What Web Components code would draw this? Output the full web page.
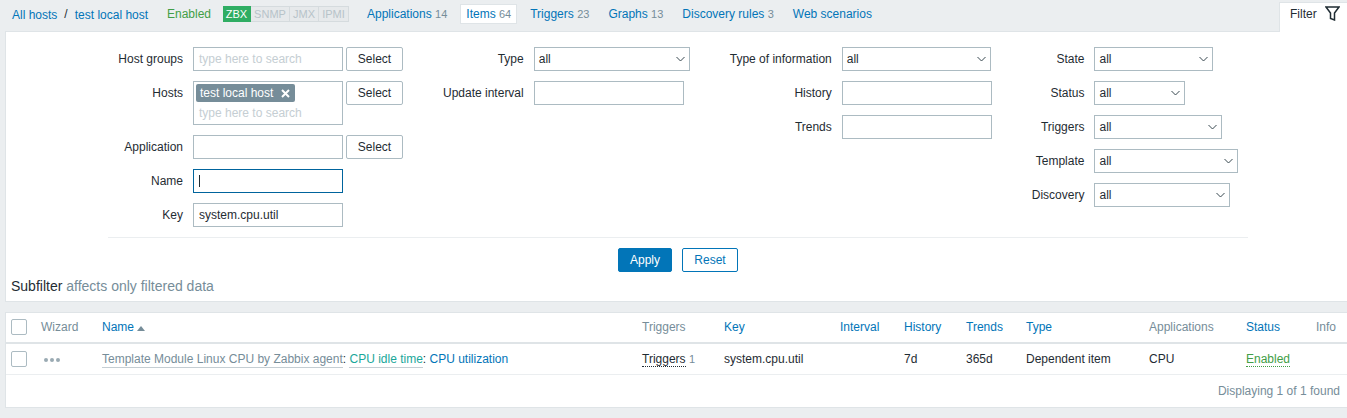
<!DOCTYPE html>
<html>
<head>
<meta charset="utf-8">
<title>Items</title>
<style>
  html, body { margin: 0; background: #ebeef0; }
  body { font: 12px/14px "Liberation Sans", Arial, sans-serif; color: #1f2c33; }
</style>
</head>
<body>
<zbx-nav></zbx-nav>
<zbx-filter>
  <filter-col style="--label: 75px">
    <filter-field label="Host groups"><text-box placeholder="type here to search"></text-box><zbx-button>Select</zbx-button></filter-field>
    <filter-field label="Hosts"><multi-select tag="test local host" placeholder="type here to search"></multi-select><zbx-button>Select</zbx-button></filter-field>
    <filter-field label="Application"><text-box></text-box><zbx-button>Select</zbx-button></filter-field>
    <filter-field label="Name"><text-box focused></text-box></filter-field>
    <filter-field label="Key"><text-box value="system.cpu.util"></text-box></filter-field>
  </filter-col>
  <filter-col>
    <filter-field label="Type"><select-box width="156"></select-box></filter-field>
    <filter-field label="Update interval"><text-box></text-box></filter-field>
  </filter-col>
  <filter-col>
    <filter-field label="Type of information"><select-box width="149"></select-box></filter-field>
    <filter-field label="History"><text-box></text-box></filter-field>
    <filter-field label="Trends"><text-box></text-box></filter-field>
  </filter-col>
  <filter-col>
    <filter-field label="State"><select-box width="119"></select-box></filter-field>
    <filter-field label="Status"><select-box width="91"></select-box></filter-field>
    <filter-field label="Triggers"><select-box width="128"></select-box></filter-field>
    <filter-field label="Template"><select-box width="144"></select-box></filter-field>
    <filter-field label="Discovery"><select-box width="136"></select-box></filter-field>
  </filter-col>
</zbx-filter>
<items-table></items-table>

<script>
const LINK = '#0275b8';
const MUTED = '#768d99';

class ZbxNav extends HTMLElement {
  constructor() {
    super();
    this.attachShadow({ mode: 'open' });
    this.shadowRoot.innerHTML = `
      <style>
      :host { display: flex; height: 31px; align-items: flex-start; white-space: nowrap; }
      a { color: ${LINK}; }
      small { font-size: 11px; color: ${MUTED}; }
      .crumbs { display: flex; margin: 8px 0 0 12px; width: 155px; }
      .crumbs i { font-style: normal; color: #1f2c33; margin: -1px 7px 0 7px; }
      .enabled { color: #429e47; margin-top: 7px; width: 56px; }
      .proto { display: flex; margin-top: 6px; height: 16px; width: 138px; font-size: 11px; line-height: 14px; text-align: center; }
      .proto span { box-sizing: border-box; border: 1px solid #d5dbde; border-left: 0; background: #e6e9eb; color: #b7c3c9; }
      .proto span.on { background: #2fad63; border-color: #2fad63; color: #fff; }
      .tabs { display: flex; gap: 7px; margin-top: 4px; }
      .tabs a { padding: 3px 6px; height: 14px; }
      .tabs a.current { background: #fff; border: 1px solid #dfe4e7; padding: 2px 5px; }
      .filter { margin-left: auto; box-sizing: border-box; height: 30px; margin-top: 2px; width: 68px; background: #fff;
        border: 1px solid #dfe4e7; border-width: 1px 0 0 1px; display: flex; padding: 4px 0 0 10px; }
      .filter svg { margin: -1px 0 0 8px; }
      </style>
      <div class="crumbs"><a>All hosts</a><i>/</i><a>test local host</a></div>
      <span class="enabled">Enabled</span>
      <div class="proto"><span class="on" style="width:28px">ZBX</span><span style="width:39px">SNMP</span><span style="width:29px">JMX</span><span style="width:30px">IPMI</span></div>
      <div class="tabs">
        <a>Applications <small>14</small></a>
        <a class="current">Items <small>64</small></a>
        <a>Triggers <small>23</small></a>
        <a>Graphs <small>13</small></a>
        <a>Discovery rules <small>3</small></a>
        <a>Web scenarios</a>
      </div>
      <div class="filter">Filter
        <svg width="15" height="15" viewBox="0 0 15 15" fill="none" stroke="#1f2c33" stroke-width="1.5">
          <path d="M1 1h13L9.5 7v7L5.5 12.5V7z"/>
        </svg>
      </div>
    `;
  }
}

class ZbxFilter extends HTMLElement {
  constructor() {
    super();
    this.attachShadow({ mode: 'open' });
    this.shadowRoot.innerHTML = `
      <style>
      :host { display: block; margin-left: 5px; background: #fff; border: 1px solid #dfe4e7; border-width: 1px 0 1px 1px; padding: 15px 0 0; height: 254px; }
      .form { margin: 0 99px 0 102px; }
      .cols { display: flex; gap: 40px; align-items: flex-start; padding-bottom: 10px; border-bottom: 1px solid #ebeef0; }
      .buttons { display: flex; justify-content: center; gap: 10px; margin-top: 10px; }
      .sub { margin: 6px 0 0 5px; font-size: 14px; line-height: 16px; }
      .sub span { color: ${MUTED}; }
      </style>
      <div class="form">
        <div class="cols"><slot></slot></div>
        <div class="buttons">
          <zbx-button primary width="54">Apply</zbx-button>
          <zbx-button outline width="56">Reset</zbx-button>
        </div>
      </div>
      <div class="sub">Subfilter <span>affects only filtered data</span></div>
    `;
  }
}

class FilterCol extends HTMLElement {
  constructor() {
    super();
    this.attachShadow({ mode: 'open' });
    this.shadowRoot.innerHTML = `
      <style>
      :host { display: grid; grid-template-columns: var(--label, auto) auto; gap: 10px; justify-items: start; }
      </style>
      <slot></slot>
    `;
  }
}

class FilterField extends HTMLElement {
  constructor() {
    super();
    this.attachShadow({ mode: 'open' });
    this.shadowRoot.innerHTML = `
      <style>
      :host { display: contents; }
      label { justify-self: end; line-height: 24px; white-space: nowrap; }
      .control { display: flex; gap: 3px; align-items: flex-start; }
      </style>
      <label>${this.getAttribute('label')}</label>
      <div class="control"><slot></slot></div>
    `;
  }
}

class TextBox extends HTMLElement {
  constructor() {
    super();
    this.attachShadow({ mode: 'open' });
    const focused = this.hasAttribute('focused');
    const placeholder = this.getAttribute('placeholder');
    this.shadowRoot.innerHTML = `
      <style>
      :host { display: block; box-sizing: border-box; width: 150px; height: 24px; padding: 0 5px; line-height: 22px;
        border: 1px solid ${focused ? '#00649d' : '#acbbc2'}; background: #fff; white-space: nowrap; }
      .ph { color: #c5ced3; }
      .caret { display: inline-block; width: 1px; height: 12px; margin-top: 5px; background: #1f2c33; vertical-align: top; }
      </style>
      ${focused ? '<span class="caret"></span>' : ''}
      ${placeholder ? `<span class="ph">${placeholder}</span>` : ''}${this.getAttribute('value') || ''}
    `;
  }
}

class MultiSelect extends HTMLElement {
  constructor() {
    super();
    this.attachShadow({ mode: 'open' });
    this.shadowRoot.innerHTML = `
      <style>
      :host { display: block; box-sizing: border-box; width: 150px; height: 44px; padding: 2px; border: 1px solid #acbbc2; background: #fff; white-space: nowrap; }
      .tag { display: inline-flex; align-items: center; gap: 8px; height: 18px; padding: 0 5px 0 4px; border-radius: 2px; background: ${MUTED}; color: #fff; }
      .ph { color: #c5ced3; margin: 4px 0 0 3px; }
      </style>
      <div class="tag">${this.getAttribute('tag')}
        <svg width="9" height="9" viewBox="0 0 9 9" stroke="#fff" stroke-width="2"><path d="M1 1l7 7M8 1L1 8"/></svg>
      </div>
      <div class="ph">${this.getAttribute('placeholder')}</div>
    `;
  }
}

class SelectBox extends HTMLElement {
  constructor() {
    super();
    this.attachShadow({ mode: 'open' });
    this.shadowRoot.innerHTML = `
      <style>
      :host { display: flex; box-sizing: border-box; width: ${this.getAttribute('width')}px; height: 24px; padding: 0 4px; align-items: center;
        justify-content: space-between; line-height: 22px; border: 1px solid #acbbc2; background: #fff; }
      svg { display: block; }
      </style>
      all
      <svg width="9" height="6" viewBox="0 0 9 6" fill="none" stroke="#384850" stroke-width="1"><path d="M.5 1l4 4 4-4"/></svg>
    `;
  }
}

class ZbxButton extends HTMLElement {
  constructor() {
    super();
    this.attachShadow({ mode: 'open' });
    const primary = this.hasAttribute('primary');
    const outline = this.hasAttribute('outline');
    const border = primary || outline ? LINK : '#acbbc2';
    const color = primary ? '#fff' : outline ? LINK : '#1f2c33';
    this.shadowRoot.innerHTML = `
      <style>
      :host { display: block; box-sizing: border-box; width: ${this.getAttribute('width') || 57}px; height: 24px; text-align: center; line-height: 22px;
        border: 1px solid ${border}; border-radius: 2px; background: ${primary ? LINK : '#fff'}; color: ${color}; }
      </style>
      <slot></slot>
    `;
  }
}

class CheckBox extends HTMLElement {
  constructor() {
    super();
    this.attachShadow({ mode: 'open' });
    this.shadowRoot.innerHTML = `
      <style>
      :host { display: block; box-sizing: border-box; width: 16px; height: 16px; border: 1px solid #acbbc2; border-radius: 2px; background: #fff; }
      </style>
    `;
  }
}

class ItemsTable extends HTMLElement {
  constructor() {
    super();
    this.attachShadow({ mode: 'open' });
    this.shadowRoot.innerHTML = `
      <style>
      :host { display: block; margin: 10px 0 0 5px; background: #fff; border: 1px solid #dfe4e7; border-width: 1px 0 1px 1px; white-space: nowrap; }
      .row { display: grid; grid-template-columns: 35px 61px 540px 82px 116px 64px 62px 60px 123px 97px 70px 1fr; align-items: center; }
      .head { height: 27px; padding-bottom: 2px; border-bottom: 2px solid #dfe4e7; color: ${MUTED}; }
      .body { height: 27px; padding-bottom: 2px; border-bottom: 1px solid #ebeef0; margin-top: 1px; }
      .row > :first-child { padding-left: 5px; }
      a { color: ${LINK}; }
      .arrow { display: inline-block; border: 4px solid transparent; border-top: 0; border-bottom: 5px solid ${MUTED}; margin-left: 3px; }
      .dots { display: flex; gap: 2px; margin: 2px 0 0 3px; }
      .dots i { width: 4px; height: 4px; border-radius: 50%; background: #9aaab3; }
      .grey { color: ${MUTED}; border-bottom: 1px solid #c5ced3; padding-bottom: 1px; }
      .teal { color: #1aa79a; border-bottom: 1px solid #c5ced3; padding-bottom: 1px; }
      .hint { border-bottom: 1px dotted #1f2c33; }
      .green { color: #429e47; border-bottom: 1px dotted #429e47; }
      small { font-size: 11px; color: ${MUTED}; }
      .foot { height: 32px; line-height: 33px; padding-right: 7px; text-align: right; color: ${MUTED}; }
      </style>
      <div class="row head">
        <div><check-box></check-box></div>
        <div>Wizard</div>
        <div><a>Name</a><span class="arrow"></span></div>
        <div>Triggers</div>
        <a>Key</a>
        <a>Interval</a>
        <a>History</a>
        <a>Trends</a>
        <a>Type</a>
        <div>Applications</div>
        <a>Status</a>
        <div>Info</div>
      </div>
      <div class="row body">
        <div><check-box></check-box></div>
        <div class="dots"><i></i><i></i><i></i></div>
        <div><span class="grey">Template Module Linux CPU by Zabbix agent</span>: <span class="teal">CPU idle time</span>: <a>CPU utilization</a></div>
        <div><span class="hint">Triggers</span> <small>1</small></div>
        <div>system.cpu.util</div>
        <div></div>
        <div>7d</div>
        <div>365d</div>
        <div>Dependent item</div>
        <div>CPU</div>
        <div><span class="green">Enabled</span></div>
        <div></div>
      </div>
      <div class="foot">Displaying 1 of 1 found</div>
    `;
  }
}

customElements.define('zbx-nav', ZbxNav);
customElements.define('zbx-filter', ZbxFilter);
customElements.define('filter-col', FilterCol);
customElements.define('filter-field', FilterField);
customElements.define('text-box', TextBox);
customElements.define('multi-select', MultiSelect);
customElements.define('select-box', SelectBox);
customElements.define('zbx-button', ZbxButton);
customElements.define('check-box', CheckBox);
customElements.define('items-table', ItemsTable);
</script>
</body>
</html>
